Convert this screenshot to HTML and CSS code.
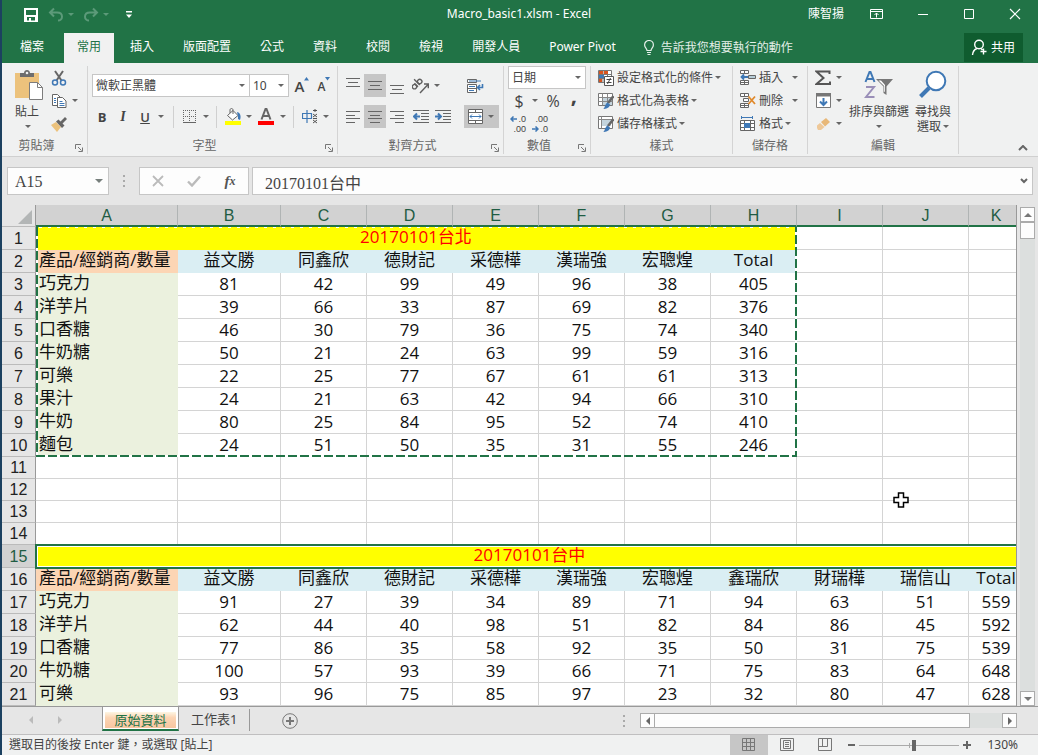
FILE: index.html
```html
<!DOCTYPE html>
<html lang="zh-Hant">
<head>
<meta charset="utf-8">
<title>Macro_basic1.xlsm - Excel</title>
<link rel="stylesheet" href="styles.css">
</head>
<body>
<div class="app">
  <header class="top">
    <div class="titlebar">
      <div class="quick">
        <button class="tbtn" aria-label="儲存"><svg width="16" height="16" viewBox="0 0 16 16"><path fill="#fff" fill-rule="evenodd" d="M1 1h14v14H1zM3 3v5h10V3zM4 10v3.500h2V11h2v2.500h4V10z"/></svg></button>
        <button class="tbtn undo" aria-label="復原"><svg width="26" height="16" viewBox="0 0 26 16" fill="none" stroke="#5c9a79" stroke-width="2"><path d="M6 1.500 2 5.500l4 4M2 5.500h7c3.500 0 5 2 5 4.200 0 2.500-2 3.800-4 3.800"/><path fill="#5c9a79" stroke="none" d="M20 6h6l-3 3z"/></svg></button>
        <button class="tbtn redo" aria-label="重做"><svg width="26" height="16" viewBox="0 0 26 16" fill="none" stroke="#5c9a79" stroke-width="2"><path d="M10 1.500l4 4-4 4M14 5.500H7c-3.500 0-5 2-5 4.200 0 2.500 2 3.800 4 3.800"/><path fill="#5c9a79" stroke="none" d="M20 6h6l-3 3z"/></svg></button>
        <button class="tbtn more" aria-label="自訂快速存取工具列"><svg width="8" height="8" viewBox="0 0 8 8" fill="#fff"><path d="M1 0h6v1.500H1zM1 3.500h6L4 7z"/></svg></button>
      </div>
      <h1 class="title">Macro_basic1.xlsm - Excel</h1>
      <div class="window-ctl">
        <span class="user">陳智揚</span>
        <button class="wbtn" aria-label="功能區顯示選項"><svg width="14" height="12" viewBox="0 0 14 12" fill="none" stroke="#fff"><path d="M.5 1.500h12v9H.5zM.5 3.500h12M6.500 9.500V5M4.500 7l2-2 2 2"/></svg></button>
        <button class="wbtn" aria-label="最小化"><svg width="12" height="12" viewBox="0 0 12 12" stroke="#fff"><path d="M1 6.500h10"/></svg></button>
        <button class="wbtn" aria-label="最大化"><svg width="12" height="12" viewBox="0 0 12 12" fill="none" stroke="#fff"><path d="M1.500 1.500h9v9h-9z"/></svg></button>
        <button class="wbtn" aria-label="關閉"><svg width="12" height="12" viewBox="0 0 12 12" stroke="#fff" stroke-width="1.200"><path d="M1 1l10 10M11 1 1 11"/></svg></button>
      </div>
    </div>
    <nav class="tabs">
      <button class="tab file">檔案</button>
      <button class="tab active">常用</button>
      <button class="tab">插入</button>
      <button class="tab">版面配置</button>
      <button class="tab">公式</button>
      <button class="tab">資料</button>
      <button class="tab">校閱</button>
      <button class="tab">檢視</button>
      <button class="tab">開發人員</button>
      <button class="tab">Power Pivot</button>
      <button class="tell"><svg width="12" height="16" viewBox="0 0 12 16" fill="none" stroke="#e4efe9" stroke-width="1.200"><path d="M4 10.500C4 8.500 1.600 7.500 1.600 4.900a4.400 4.400 0 0 1 8.800 0C10.400 7.500 8 8.500 8 10.500zM4 12.500h4M4.500 14.500h3"/></svg>告訴我您想要執行的動作</button>
      <button class="share"><svg width="17" height="17" viewBox="0 0 17 17" fill="none" stroke="#fff" stroke-width="1.400"><circle cx="8" cy="5.500" r="4.300"/><path d="M1.500 16c.3-3.600 2-5.600 4.500-6.500M10 9.500l1.500 1.500M12.500 9.500v6M9.500 12.500h6"/></svg>共用</button>
    </nav>
  </header>

  <section class="ribbon">
    <div class="group clip">
      <div class="body cols">
        <button class="big"><svg width="30" height="32" viewBox="0 0 30 32"><path fill="#ecc27c" d="M1 4h24v25H1z"/><path fill="#6d6d6d" d="M6 8V4h4c0-4 6-4 6 0h4v4z"/><circle cx="13" cy="4" r="1.300" fill="#f0f1f1"/><path fill="#fff" stroke="#7d7d7d" d="M15.500 13.500h8l5 5v12h-13z"/><path fill="none" stroke="#7d7d7d" d="M23.500 13.500v5h5"/></svg><span>貼上</span><i class="caret"></i></button>
        <div class="stack">
          <button class="ib" aria-label="剪下"><svg width="16" height="16" viewBox="0 0 16 16" fill="none"><path stroke="#666" stroke-width="2" d="M4 1l6.500 9.500M12 1 5.500 10.500"/><g stroke="#3f78b5" stroke-width="1.500"><circle cx="4" cy="12.500" r="2.500"/><circle cx="12" cy="12.500" r="2.500"/></g></svg></button>
          <div class="row"><button class="ib" aria-label="複製"><svg width="16" height="16" viewBox="0 0 16 16" fill="#fff" stroke="#666"><path d="M1.500 1.500h5l3 3v8h-8z"/><path d="M6.500 4.500h5l3.500 3.500v6.500H6.500z"/><path stroke="#3f78b5" d="M3 5.500h2M3 7.500h2M3 9.500h2M8.500 8.500h3M8.500 10.500h5M8.500 12.500h5"/></svg></button><i class="caret"></i></div>
          <button class="ib" aria-label="複製格式"><svg width="16" height="16" viewBox="0 0 16 16"><path fill="#ecc27c" d="M0 9l5-3 5 5-4 5z"/><path fill="#666" d="M5 5.500 7.500 3.500l2 2L14 1l2 2-4.500 4.500 2 2L11 12z"/></svg></button>
        </div>
      </div>
      <div class="foot"><span>剪貼簿</span><button class="launch" aria-label="剪貼簿設定"><svg width="8" height="8" viewBox="0 0 8 8" fill="none" stroke="#777"><path d="M.5 5V.5H6M3 3l3.500 3.500M7.500 3.500v4h-4"/></svg></button></div>
    </div>

    <div class="group font">
      <div class="body two">
        <div class="row">
          <label class="combo fam"><select aria-label="字型"><option>微軟正黑體</option></select></label>
          <label class="combo size"><select aria-label="字型大小"><option>10</option></select></label>
          <button class="ib grow" aria-label="放大字型"><span class="up">A</span><svg width="5" height="4" viewBox="0 0 5 4"><path fill="#3f78b5" d="M0 3.500h5L2.500 0z"/></svg></button>
          <button class="ib grow" aria-label="縮小字型"><span class="dn">A</span><svg width="5" height="4" viewBox="0 0 5 4"><path fill="#3f78b5" d="M0 0h5L2.500 3.500z"/></svg></button>
        </div>
        <div class="row">
          <button class="ib b">B</button><button class="ib i">I</button><button class="ib u">U</button><i class="caret"></i>
          <i class="sep"></i>
          <button class="ib" aria-label="框線"><svg width="14" height="14" viewBox="0 0 14 14" fill="none" stroke="#666"><path stroke-dasharray="1 1" d="M0 .5h13M0 6.500h13M.5 0v13M6.500 0v13M12.500 0v13"/><path d="M0 12.500h13"/></svg></button><i class="caret"></i>
          <i class="sep"></i>
          <button class="ib" aria-label="填滿色彩"><svg width="16" height="17" viewBox="0 0 16 17"><path fill="#ff0" d="M0 13h16v4H0z"/><path fill="#fff" stroke="#666" d="M2.500 7.500 8 2.500l5 5-5.500 4.500z"/><path fill="none" stroke="#666" d="M5 5V2c0-2 3-2 3 0v4"/><path fill="#3f78b5" d="M12 4c3 0 4.500 4 3 8l-2-1V8z"/></svg></button><i class="caret"></i>
          <button class="ib fc" aria-label="字型色彩"><svg width="16" height="17" viewBox="0 0 16 17"><path fill="#f00" d="M0 13h16v4H0z"/><path fill="none" stroke="#666" stroke-width="2" d="M3.500 11.500 7.500 1h1l4 10.500M5 8h6"/></svg></button><i class="caret"></i>
          <i class="sep"></i>
          <button class="ib" aria-label="注音標示"><svg width="16" height="15" viewBox="0 0 16 15" fill="none"><path stroke="#3f78b5" stroke-width="1.200" d="M.5 4.500h9v5h-9zM5 1v13"/><path stroke="#555" d="M11 1.500h4M13 0v3M11 5l4 3M15 5l-4 3M11 9.500h4M11 11l4 3M15 11l-4 3"/></svg></button><i class="caret"></i>
        </div>
      </div>
      <div class="foot"><span>字型</span><button class="launch" aria-label="字型設定"><svg width="8" height="8" viewBox="0 0 8 8" fill="none" stroke="#777"><path d="M.5 5V.5H6M3 3l3.500 3.500M7.500 3.500v4h-4"/></svg></button></div>
    </div>

    <div class="group align">
      <div class="body two">
        <div class="row">
          <button class="ib" aria-label="靠上對齊"><svg width="14" height="16" viewBox="0 0 14 16" stroke="#666"><path d="M0 .5h14M2 4.500h10M0 8.500h14"/></svg></button>
          <button class="ib on" aria-label="置中對齊"><svg width="14" height="16" viewBox="0 0 14 16" stroke="#666"><path d="M0 3.500h14M2 7.500h10M0 11.500h14"/></svg></button>
          <button class="ib" aria-label="靠下對齊"><svg width="14" height="16" viewBox="0 0 14 16" stroke="#666"><path d="M0 7.500h14M2 11.500h10M0 15.500h14"/></svg></button>
          <button class="ib nudge" aria-label="方向"><svg width="18" height="16" viewBox="0 0 18 16" fill="none" stroke="#5f5f5f" stroke-width="1.400"><g transform="rotate(-45 6 8)"><circle cx="3" cy="6" r="2.200"/><path d="M5.500 3.500v5M8 .5v8"/><circle cx="10.400" cy="6" r="2.200"/></g><path d="M8 15l8-8.500M12 6h4.300v4.300"/></svg></button><i class="caret"></i>
          <div class="end"><button class="ib" aria-label="自動換列"><svg width="17" height="16" viewBox="0 0 17 16" fill="#fff" stroke="#666"><path d="M.5 1.500h9v3h-9zM.5 6.500h9v8h-9zM.5 10.500h9"/><path fill="none" stroke="#3f78b5" d="M2 8.500h6M2 3h12M2 12.500h5"/><path fill="none" stroke="#3f78b5" stroke-width="1.600" d="M15.500 6v3.500H11M13 7l-2.500 2.500L13 12"/></svg></button></div>
        </div>
        <div class="row">
          <button class="ib" aria-label="靠左對齊"><svg width="14" height="14" viewBox="0 0 14 14" stroke="#666"><path d="M0 1.500h14M0 5.500h9M0 8.500h14M0 12.500h9"/></svg></button>
          <button class="ib on" aria-label="置中"><svg width="14" height="14" viewBox="0 0 14 14" stroke="#666"><path d="M0 1.500h14M2 5.500h10M0 8.500h14M2 12.500h10"/></svg></button>
          <button class="ib" aria-label="靠右對齊"><svg width="14" height="14" viewBox="0 0 14 14" stroke="#666"><path d="M0 1.500h14M5 5.500h9M0 8.500h14M5 12.500h9"/></svg></button>
          <button class="ib nudge" aria-label="減少縮排"><svg width="16" height="14" viewBox="0 0 16 14" fill="none" stroke="#666"><path d="M0 .5h16M8 3.500h8M8 6.500h8M8 9.500h8M0 12.500h16"/><path stroke="#3f78b5" stroke-width="2" d="M7 6.500H2M4 3.500l-3 3 3 3"/></svg></button>
          <button class="ib" aria-label="增加縮排"><svg width="16" height="14" viewBox="0 0 16 14" fill="none" stroke="#666"><path d="M0 .5h16M8 3.500h8M8 6.500h8M8 9.500h8M0 12.500h16"/><path stroke="#3f78b5" stroke-width="2" d="M0 6.500h5M3 3.500l3 3-3 3"/></svg></button>
          <div class="end on"><button class="ib" aria-label="跨欄置中"><svg width="15" height="15" viewBox="0 0 15 15" fill="#fff" stroke="#666"><path d="M.5.5h14v14H.5zM.5 3.500h14M.5 11.500h14M7.500 0v3M7.500 12v3"/><path stroke="#3f78b5" fill="none" d="M2 7.500h11M4 5.500l-2 2 2 2M11 5.500l2 2-2 2"/></svg></button><i class="caret"></i></div>
        </div>
      </div>
      <div class="foot"><span>對齊方式</span><button class="launch" aria-label="對齊設定"><svg width="8" height="8" viewBox="0 0 8 8" fill="none" stroke="#777"><path d="M.5 5V.5H6M3 3l3.500 3.500M7.500 3.500v4h-4"/></svg></button></div>
    </div>

    <div class="group number">
      <div class="body">
        <label class="combo fmt"><select aria-label="數值格式"><option>日期</option></select></label>
        <div class="row"><button class="ib money">$</button><i class="caret"></i><button class="ib pct">%</button><button class="ib comma">,</button></div>
        <div class="row">
          <button class="ib dec" aria-label="增加小數位數"><span class="pair"><svg width="7" height="6" viewBox="0 0 7 6" fill="none" stroke="#3f78b5" stroke-width="1.500"><path d="M7 3H1M3.500.5 1 3l2.500 2.500"/></svg>.0</span><span>.00</span></button>
          <button class="ib dec" aria-label="減少小數位數"><span>.00</span><span class="pair"><svg width="7" height="6" viewBox="0 0 7 6" fill="none" stroke="#3f78b5" stroke-width="1.500"><path d="M0 3h6M3.500.5 6 3 3.500 5.500"/></svg>.0</span></button>
        </div>
      </div>
      <div class="foot"><span>數值</span><button class="launch" aria-label="數值設定"><svg width="8" height="8" viewBox="0 0 8 8" fill="none" stroke="#777"><path d="M.5 5V.5H6M3 3l3.500 3.500M7.500 3.500v4h-4"/></svg></button></div>
    </div>

    <div class="group styles">
      <div class="body">
        <button class="line"><svg width="16" height="16" viewBox="0 0 16 16"><path fill="#fff" stroke="#777" d="M.5.5h13v12H.5zM.5 4.500h13M.5 8.500h13M5 .5v12M9.500.5v12"/><path fill="#d8541f" d="M1 1h4v3H1zM6 1h4v3H6zM1 9h3v3H1z"/><path fill="#3f78b5" d="M1 5h5v3H1z"/><path fill="#fff" stroke="#555" d="M6.500 6.500h9v9h-9z"/><path stroke="#444" d="M8.500 9.500h5M8.500 12.500h5M12.500 8l-3 6"/></svg>設定格式化的條件<i class="caret"></i></button>
        <button class="line"><svg width="16" height="16" viewBox="0 0 16 16"><path fill="#fff" stroke="#777" d="M.5.5h14v12H.5z"/><path fill="#c4d4dd" d="M5 5h9v7H5z"/><path fill="none" stroke="#888" d="M.5 4.500h14M.5 8.500h14M4.500.5v12M9.500.5v12"/><path stroke="#666" stroke-width="2.500" d="M15.500 3 10 10"/><path fill="#3f78b5" d="M5 16c2 0 1.500-5 4.500-6.500l2.500 2C11.500 15 8 16 5 16z"/></svg>格式化為表格<i class="caret"></i></button>
        <button class="line"><svg width="16" height="16" viewBox="0 0 16 16"><path fill="#fff" stroke="#777" d="M.5.5h14v12H.5z"/><path fill="#c4d4dd" d="M4 4h9v6H4z"/><path fill="none" stroke="#888" d="M.5 3.500h14M3.500.5v12"/><path stroke="#666" stroke-width="2.500" d="M15.500 3 10 10"/><path fill="#3f78b5" d="M5 16c2 0 1.500-5 4.500-6.500l2.500 2C11.500 15 8 16 5 16z"/></svg>儲存格樣式<i class="caret"></i></button>
      </div>
      <div class="foot"><span>樣式</span></div>
    </div>

    <div class="group cells">
      <div class="body">
        <button class="line far"><svg width="16" height="16" viewBox="0 0 16 16" fill="#fff" stroke="#666"><path d="M.5.5h8v3h-8zM4.500.5v3M.5 10.500h8v4h-8zM4.500 10.500v4M.5 12.500h8M8.500 5.500h7v3h-7z"/><path fill="#b8cdd8" stroke="none" d="M9 6h6v2H9z"/><path fill="none" stroke="#3f78b5" stroke-width="1.800" d="M8 7H2M4 4.500 1.500 7 4 9.500"/></svg>插入<i class="caret"></i></button>
        <button class="line far"><svg width="16" height="16" viewBox="0 0 16 16" fill="#fff" stroke="#666"><path d="M.5.5h8v3h-8zM4.500.5v3M.5 10.500h8v4h-8zM4.500 10.500v4M.5 12.500h8M3.500 5.500h5v3h-5z"/><path stroke="#e08a2c" stroke-width="1.800" d="M8.500 3.500 15 11M15 3.500 8.500 11"/></svg>刪除<i class="caret"></i></button>
        <button class="line"><svg width="16" height="16" viewBox="0 0 16 16" fill="#fff"><path stroke="#3f78b5" d="M1.500 0v3M12.500 0v3M2 1.500h10"/><path stroke="#666" d="M.5 4.500h14v10H.5zM.5 7.500h14M.5 11.500h14M4.500 4.500v10M10.500 4.500v10"/><path fill="#3f78b5" d="M4 7h6v5H4z"/></svg>格式<i class="caret"></i></button>
      </div>
      <div class="foot"><span>儲存格</span></div>
    </div>

    <div class="group edit">
      <div class="body cols">
        <div class="stack">
          <div class="row"><button class="ib" aria-label="自動加總"><svg width="16" height="16" viewBox="0 0 16 16" fill="none" stroke="#555" stroke-width="2"><path d="M14.500 4V1.500H1.500L8.500 8l-7 6h13.500V11.500"/></svg></button><i class="caret"></i></div>
          <div class="row"><button class="ib" aria-label="填滿"><svg width="15" height="15" viewBox="0 0 15 15"><path fill="#fff" stroke="#777" d="M.5.5h14v14H.5z"/><path fill="#777" d="M0 0h15v3.500H0z"/><path fill="none" stroke="#3f78b5" stroke-width="2" d="M7.500 5v7M4 8.500 7.500 12 11 8.500"/></svg></button><i class="caret"></i></div>
          <div class="row"><button class="ib" aria-label="清除"><svg width="14" height="14" viewBox="0 0 14 14"><path fill="#e8b878" d="M5 5 10 1l4 4-5 4.500z"/><path fill="#eec898" d="M4 6 8.500 10 5 13H2L1 11V8.500z"/></svg></button><i class="caret"></i></div>
        </div>
        <button class="big sort"><svg width="30" height="30" viewBox="0 0 30 30" fill="none"><path stroke="#3f78b5" stroke-width="2" d="M1.500 12 5.500 2h1L10.500 12M3 9h6"/><path stroke="#9a8fb8" stroke-width="2" d="M2 17h8L2 27h8.500"/><path fill="#777" d="M12 9h17l-6.500 7.500V25l-3-2v-6.500z"/><path fill="#fff" d="M14.500 10.500h2.500l4 4.500v7l-.8-.5V16z"/></svg><span>排序與篩選</span><i class="caret"></i></button>
        <button class="big find"><svg width="30" height="30" viewBox="0 0 30 30"><circle cx="18" cy="11" r="9.300" fill="#fff" stroke="#3f78b5" stroke-width="2"/><path stroke="#3f78b5" stroke-width="4" d="M11 18 2.500 26.500"/></svg><span>尋找與</span><span class="with">選取<i class="caret"></i></span></button>
      </div>
      <div class="foot"><span>編輯</span></div>
    </div>
    <button class="collapse" aria-label="摺疊功能區"><svg width="10" height="6" viewBox="0 0 10 6" fill="none" stroke="#666" stroke-width="2"><path d="M1 5l4-4 4 4"/></svg></button>
  </section>

  <section class="formula">
    <div class="box name"><input value="A15" aria-label="名稱方塊"><i class="caret teal"></i></div>
    <i class="dots"></i>
    <div class="box fx">
      <button class="ib" aria-label="取消"><svg width="12" height="12" viewBox="0 0 12 12" stroke="#bbb" stroke-width="1.800"><path d="M1 1l10 10M11 1 1 11"/></svg></button>
      <button class="ib" aria-label="輸入"><svg width="14" height="12" viewBox="0 0 14 12" fill="none" stroke="#bbb" stroke-width="2.400"><path d="M1 6.500 5 10.500 13 1.500"/></svg></button>
      <button class="ib fxb"><i>f</i><small>x</small></button>
    </div>
    <div class="box text"><input value="20170101台中" aria-label="資料編輯列"><svg width="8" height="6" viewBox="0 0 8 6" fill="none" stroke="#666" stroke-width="2"><path d="M1 1l3 3 3-3"/></svg></div>
  </section>

  <main class="work">
    <div class="pane">
      <table class="sheet">
        <colgroup><col class="c0"><col class="ca"><col class="cb"><col class="cn"><col class="cn"><col class="cn"><col class="cn"><col class="cn"><col class="cn"><col class="cn"><col class="cn"><col class="ck"></colgroup>
        <thead><tr><th class="corner"><svg width="14" height="14" viewBox="0 0 14 14"><path fill="#b3b6b6" d="M14 0v14H0z"/></svg></th><th>A</th><th>B</th><th>C</th><th>D</th><th>E</th><th>F</th><th>G</th><th>H</th><th>I</th><th>J</th><th>K</th></tr></thead>
        <tbody>
          <tr><th>1</th><td class="banner" colspan="8">20170101台北</td><td></td><td></td><td></td></tr>
          <tr><th>2</th><td class="key">產品/經銷商/數量</td><td class="hd">益文勝</td><td class="hd">同鑫欣</td><td class="hd">德財記</td><td class="hd">采德樺</td><td class="hd">漢瑞強</td><td class="hd">宏聰煌</td><td class="hd">Total</td><td></td><td></td><td></td></tr>
          <tr><th>3</th><td class="item">巧克力</td><td>81</td><td>42</td><td>99</td><td>49</td><td>96</td><td>38</td><td>405</td><td></td><td></td><td></td></tr>
          <tr><th>4</th><td class="item">洋芋片</td><td>39</td><td>66</td><td>33</td><td>87</td><td>69</td><td>82</td><td>376</td><td></td><td></td><td></td></tr>
          <tr><th>5</th><td class="item">口香糖</td><td>46</td><td>30</td><td>79</td><td>36</td><td>75</td><td>74</td><td>340</td><td></td><td></td><td></td></tr>
          <tr><th>6</th><td class="item">牛奶糖</td><td>50</td><td>21</td><td>24</td><td>63</td><td>99</td><td>59</td><td>316</td><td></td><td></td><td></td></tr>
          <tr><th>7</th><td class="item">可樂</td><td>22</td><td>25</td><td>77</td><td>67</td><td>61</td><td>61</td><td>313</td><td></td><td></td><td></td></tr>
          <tr><th>8</th><td class="item">果汁</td><td>24</td><td>21</td><td>63</td><td>42</td><td>94</td><td>66</td><td>310</td><td></td><td></td><td></td></tr>
          <tr><th>9</th><td class="item">牛奶</td><td>80</td><td>25</td><td>84</td><td>95</td><td>52</td><td>74</td><td>410</td><td></td><td></td><td></td></tr>
          <tr><th>10</th><td class="item">麵包</td><td>24</td><td>51</td><td>50</td><td>35</td><td>31</td><td>55</td><td>246</td><td></td><td></td><td></td></tr>
          <tr class="empty"><th>11</th><td></td><td></td><td></td><td></td><td></td><td></td><td></td><td></td><td></td><td></td><td></td></tr>
          <tr class="empty"><th>12</th><td></td><td></td><td></td><td></td><td></td><td></td><td></td><td></td><td></td><td></td><td></td></tr>
          <tr class="empty"><th>13</th><td></td><td></td><td></td><td></td><td></td><td></td><td></td><td></td><td></td><td></td><td></td></tr>
          <tr class="empty"><th>14</th><td></td><td></td><td></td><td></td><td></td><td></td><td></td><td></td><td></td><td></td><td></td></tr>
          <tr class="picked"><th>15</th><td class="banner" colspan="11">20170101台中</td></tr>
          <tr><th>16</th><td class="key">產品/經銷商/數量</td><td class="hd">益文勝</td><td class="hd">同鑫欣</td><td class="hd">德財記</td><td class="hd">采德樺</td><td class="hd">漢瑞強</td><td class="hd">宏聰煌</td><td class="hd">鑫瑞欣</td><td class="hd">財瑞樺</td><td class="hd">瑞信山</td><td class="hd">Total</td></tr>
          <tr><th>17</th><td class="item">巧克力</td><td>91</td><td>27</td><td>39</td><td>34</td><td>89</td><td>71</td><td>94</td><td>63</td><td>51</td><td>559</td></tr>
          <tr><th>18</th><td class="item">洋芋片</td><td>62</td><td>44</td><td>40</td><td>98</td><td>51</td><td>82</td><td>84</td><td>86</td><td>45</td><td>592</td></tr>
          <tr><th>19</th><td class="item">口香糖</td><td>77</td><td>86</td><td>35</td><td>58</td><td>92</td><td>35</td><td>50</td><td>31</td><td>75</td><td>539</td></tr>
          <tr><th>20</th><td class="item">牛奶糖</td><td>100</td><td>57</td><td>93</td><td>39</td><td>66</td><td>71</td><td>75</td><td>83</td><td>64</td><td>648</td></tr>
          <tr><th>21</th><td class="item">可樂</td><td>93</td><td>96</td><td>75</td><td>85</td><td>97</td><td>23</td><td>32</td><td>80</td><td>47</td><td>628</td></tr>
        </tbody>
      </table>
      <svg class="ants" width="763" height="233" viewBox="0 0 763 233" fill="none" stroke-width="2"><path stroke="#fff" d="M2 1v229h759V1"/><path stroke="#fff" stroke-width="1" stroke-dasharray="3 6" d="M4 1.500h757"/><path stroke="#217346" stroke-dasharray="9 3" d="M2 1v229h759V1"/></svg>
      <div class="selection"></div>
      <svg class="cursor" width="16" height="16" viewBox="0 0 16 16"><path fill="#fff" stroke="#000" stroke-width="1.500" d="M5.500 1h5v4.500H15v5h-4.500V15h-5v-4.500H1v-5h4.500z"/></svg>
    </div>
    <div class="vscroll"><button aria-label="向上"><i class="tri up"></i></button><div class="thumb"></div><button class="last" aria-label="向下"><i class="tri down"></i></button></div>
  </main>

  <footer class="sheets">
    <div class="nav"><i class="tri left dim"></i><i class="tri right dim"></i></div>
    <button class="stab current"><span>原始資料</span></button>
    <button class="stab">工作表1</button>
    <button class="add" aria-label="新工作表"><svg width="16" height="16" viewBox="0 0 16 16" fill="none" stroke="#777"><circle cx="8" cy="8" r="7.300"/><path stroke-width="2" d="M8 4v8M4 8h8"/></svg></button>
    <i class="dots"></i>
    <div class="hscroll"><button aria-label="向左"><i class="tri left"></i></button><div class="thumb"></div><button class="last" aria-label="向右"><i class="tri right"></i></button></div>
  </footer>

  <footer class="status">
    <span class="msg">選取目的後按 Enter 鍵，或選取 [貼上]</span>
    <button class="view on" aria-label="標準模式"><svg width="14" height="14" viewBox="0 0 14 14" fill="none" stroke="#777"><path d="M.5.5h12v12H.5zM4.500 0v13M8.500 0v13M0 4.500h13M0 8.500h13"/></svg></button>
    <button class="view" aria-label="整頁模式"><svg width="14" height="14" viewBox="0 0 14 14" fill="none" stroke="#777"><path d="M.5.5h13v12H.5zM3.500 2.500h7v8h-7zM5 4.500h4M5 6.500h4M5 8.500h4"/></svg></button>
    <button class="view" aria-label="分頁預覽"><svg width="14" height="14" viewBox="0 0 14 14" fill="none" stroke="#777"><path d="M.5.5h13v12H.5zM4.500 1v7.500M9.500 1v7.500M0 8.500h9.500"/></svg></button>
    <button class="zbtn" aria-label="縮小"><svg width="7" height="8" viewBox="0 0 7 8"><path stroke="#666" stroke-width="2" d="M0 4h7"/></svg></button>
    <input class="zoom" type="range" min="0" max="100" value="55" aria-label="顯示比例">
    <button class="zbtn" aria-label="放大"><svg width="8" height="8" viewBox="0 0 8 8"><path stroke="#666" stroke-width="2" d="M0 4h8M4 0v8"/></svg></button>
    <button class="pctv">130%</button>
  </footer>
</div>
</body>
</html>
```
FILE: styles.css
```css
* { box-sizing: border-box; }
body {
  margin: 0;
  font: 12px/16px "Noto Sans", "Noto Sans CJK TC", sans-serif;
  color: #444;
  background: #e6e6e6;
}
button, input, select {
  font: inherit;
  color: inherit;
  margin: 0;
  padding: 0;
  border: 0;
  border-radius: 0;
  background: none;
  white-space: nowrap;
}
svg { display: block; flex: none; }
i { font-style: normal; }
.app {
  min-height: 100vh;
  display: flex;
  flex-direction: column;
  border-left: 2px solid #1c4160;
  overflow: hidden;
}

/* title bar and tabs */
.top { background: #217346; color: #fff; }
.titlebar {
  display: grid;
  grid-template-columns: 1fr auto 1fr;
  align-items: center;
  height: 27px;
}
.quick { display: flex; align-items: center; gap: 9px; padding: 2px 0 0 21px; }
.more { margin-left: 7px; }
.title { margin: 0 2px 0 0; font-size: 12px; font-weight: 400; }
.window-ctl { display: flex; align-items: center; justify-content: flex-end; }
.user { margin-right: 10px; }
.wbtn { width: 46px; height: 26px; display: flex; align-items: center; justify-content: center; }
.tabs { display: flex; align-items: flex-end; gap: 3px; height: 36px; padding-left: 5px; }
.tab { height: 30px; padding: 0 13px 2px; }
.file { margin-right: 4px; }
.tab.active { background: #f1f1f1; color: #217346; }
.tell { height: 30px; display: flex; align-items: center; gap: 6px; margin-left: 11px; color: #e4efe9; }
.share {
  display: flex;
  align-items: center;
  gap: 3px;
  height: 29px;
  margin: 0 15px 1px auto;
  padding: 0 8px 0 7px;
  background: #0f5c2f;
}

/* ribbon */
.ribbon {
  display: flex;
  height: 94px;
  padding: 3px 0 2px;
  background: #f0f1f1;
  border-bottom: 1px solid #d0d0d0;
}
.group { display: flex; flex-direction: column; border-right: 1px solid #d4d4d4; flex: none; }
.body { height: 73px; padding: 0 4px; }
.body.two { padding-top: 8px; display: flex; flex-direction: column; gap: 8px; }
.body.cols { display: flex; }
.row { display: flex; align-items: center; height: 23px; }
.foot { display: flex; align-items: center; height: 16px; color: #666; }
.foot span { flex: 1; text-align: center; }
.launch { width: 16px; height: 14px; padding: 4px 0 0 4px; }
.clip { width: 86px; }
.font { width: 250px; }
.align { width: 166px; }
.number { width: 87px; }
.styles { width: 142px; }
.cells { width: 75px; }
.edit { width: 151px; }
.ib {
  width: 22px;
  height: 23px;
  display: flex;
  align-items: center;
  justify-content: center;
  flex: none;
}
.on { background: #c6c6c6; }
.caret { width: 10px; flex: none; display: flex; justify-content: center; }
.caret::before { content: ""; border: 3px solid transparent; border-top-color: #666; border-bottom: 0; }
.sep { width: 1px; height: 22px; margin: 0 5px; background: #d0d0d0; }
.big { display: flex; flex-direction: column; align-items: center; line-height: 15px; padding-top: 3px; }
.big svg { margin-bottom: 3px; }
.big > .caret { margin-top: 6px; }
.clip .body { padding: 0; }
.clip .big { width: 46px; padding-left: 8px; align-items: flex-start; }
.clip .big svg { margin-left: 4px; }
.clip .big span { margin-left: 5px; }
.clip .big .caret { margin-left: 13px; }
.clip .stack { width: 40px; }
.combo { position: relative; flex: none; height: 23px; border: 1px solid #c6c6c6; background: #fff; display: block; }
.combo::after {
  content: "";
  position: absolute;
  right: 4px;
  top: 9px;
  border: 3px solid transparent;
  border-top-color: #666;
  border-bottom: 0;
}
.combo select { appearance: none; width: 100%; height: 21px; padding-left: 3px; display: block; outline: 0; }
.fam { width: 158px; }
.size { width: 40px; margin-left: -1px; margin-right: 2px; }
.fmt { width: 78px; }
.grow { align-items: flex-start; padding-top: 3px; }
.grow .up { font: 600 15px/18px "Open Sans", sans-serif; }
.grow .dn { font: 600 12px/20px "Open Sans", sans-serif; }
.b { width: 20px; font: 700 13px/20px "Open Sans", sans-serif; }
.i { font: italic 600 14px/20px "Liberation Serif", serif; }
.u { font: 600 13px/20px "Open Sans", sans-serif; text-decoration: underline; }
.u + .caret { margin-right: 2px; }
.fc { width: 24px; }
.nudge { margin-left: 2px; }
.end { display: flex; align-items: center; width: 35px; margin-left: auto; }
.money, .pct { font: 16px/20px "Open Sans", sans-serif; }
.pct { width: 26px; }
.comma { width: 16px; font: 700 22px/20px "Open Sans", sans-serif; padding-bottom: 13px; }
.dec {
  flex-direction: column;
  align-items: flex-end;
  font: 9px/10px "Liberation Sans", sans-serif;
  padding-right: 4px;
}
.pair { display: flex; align-items: center; gap: 1px; }
.styles .body, .cells .body { padding: 0 0 0 7px; }
.line { display: flex; align-items: center; height: 23px; width: 100%; }
.line svg { margin-right: 3px; }
.far .caret { margin-left: 7px; }
.edit .stack { width: 33px; }
.edit .body { gap: 4px; }
.edit .big { padding-top: 4px; }
.edit .big svg { margin-bottom: 4px; }
.sort { width: 60px; margin-right: 2px; }
.find { width: 36px; }
.with { display: flex; align-items: center; }
.find .with { align-self: flex-start; padding-left: 2px; }
.collapse { margin: auto 8px 0 auto; width: 12px; height: 12px; }

/* formula bar */
.formula { display: flex; align-items: center; height: 48px; padding: 0 5px; }
.box {
  display: flex;
  align-items: center;
  height: 28px;
  background: #fdfdfd;
  border: 1px solid #c6c6c6;
  font: 16px/20px "Liberation Serif", "Noto Sans CJK TC", serif;
}
.box input { flex: 1; min-width: 0; height: 26px; padding-top: 2px; outline: 0; }
.name { width: 102px; padding: 0 4px 0 7px; }
.teal::before { border-width: 4px 4px 0; border-top-color: #777f7c; }
.dots { width: 2px; height: 12px; background: repeating-linear-gradient(#aaa 0 2px, transparent 2px 5px); }
.formula .dots { margin: 0 14px; }
.fx { width: 110px; padding: 0 7px; justify-content: space-between; }
.fxb { font: italic 700 15px/20px "Liberation Serif", serif; color: #555; }
.fxb i { font-style: italic; }
.fxb small { font-size: 12px; }
.text { flex: 1; margin-left: 3px; padding: 0 4px 0 12px; }

/* worksheet */
.work { flex: 1; display: flex; min-height: 0; }
.pane { flex: 1; min-width: 0; position: relative; overflow: hidden; background: #fff; border-right: 1px solid #999; }
.sheet { table-layout: fixed; width: 1022px; border-collapse: separate; border-spacing: 0; }
.c0 { width: 34px; }
.ca { width: 142px; }
.cb { width: 103px; }
.cn { width: 86px; }
.ck { width: 55px; }
.sheet th {
  padding: 1px 0 0;
  font: 16px/20px "Liberation Sans", "Noto Sans CJK TC", sans-serif;
  color: #222;
  background: #e6e6e6;
  border-right: 1px solid #999;
  border-bottom: 1px solid #bbb;
}
.sheet thead th {
  height: 22px;
  line-height: 19px;
  color: #1f5c43;
  background: #d2d2d2;
  border-right-color: #b0b4b4;
  border-bottom: 2px solid #217346;
}
.sheet thead .corner { background: #e6e6e6; border-bottom: 1px solid #bbb; border-right-color: #999; }
.corner svg { margin: 2px 3px 0 auto; }
.sheet td {
  height: 23px;
  padding: 0;
  font: 17px/22px "Open Sans", "Noto Sans CJK TC", sans-serif;
  color: #111;
  text-align: center;
  border-right: 1px solid #d4d4d4;
  border-bottom: 1px solid #d4d4d4;
  white-space: nowrap;
}
.sheet .empty td { height: 22px; line-height: 21px; }
.sheet .banner, .sheet .key, .sheet .item, .sheet .hd { line-height: 20px; padding-bottom: 2px; }
.sheet .banner { background: #ff0; color: #f00; border-color: #ff0; }
.sheet .key, .sheet .item { text-align: left; padding-left: 3px; background: #ebf1de; border-color: #ebf1de; }
.sheet .key { background: #fcd5b4; border-color: #fcd5b4; }
.sheet .hd { background: #daeef3; border-color: #daeef3; }
.sheet .picked th { background: #d2d2d2; color: #1f5c43; }
.ants { position: absolute; left: 33px; top: 21px; }
.selection {
  position: absolute;
  left: 33px;
  right: -4px;
  top: 339px;
  height: 25px;
  border: 2px solid #217346;
  box-shadow: inset 0 0 0 1px #fff;
}
.cursor { position: absolute; left: 891px; top: 287px; }
.vscroll { display: flex; flex-direction: column; width: 21px; padding: 2px 3px 0; }
.vscroll, .hscroll { background: #dcdfde; background-clip: content-box; }
.vscroll button, .hscroll button {
  width: 15px;
  height: 15px;
  display: flex;
  align-items: center;
  justify-content: center;
  background: #fdfdfd;
  border: 1px solid #ababab;
}
.vscroll .thumb { height: 17px; background: #fdfdfd; border: 1px solid #ababab; }
.vscroll .last { margin-top: auto; }
.hscroll .last { margin-left: auto; }
.tri { border: 4px solid transparent; }
.tri.up { border-bottom-color: #777; border-top: 0; }
.tri.down { border-top-color: #777; border-bottom: 0; }
.tri.left { border-right-color: #666; border-left: 0; }
.tri.right { border-left-color: #666; border-right: 0; }
.tri.dim.left { border-right-color: #bbb; }
.tri.dim.right { border-left-color: #bbb; }

/* sheet tabs */
.sheets { display: flex; align-items: center; height: 28px; padding-right: 21px; border-top: 1px solid #999; }
.nav { width: 100px; display: flex; gap: 25px; padding: 0 0 2px 27px; }
.stab { align-self: flex-start; height: 22px; padding: 0 12px 2px; font-size: 13px; }
.stab:not(.current) { border-right: 1px solid #999; margin-top: 2px; }
.current {
  width: 77px;
  height: 24px;
  padding: 4px 2px 1px;
  background: #fff;
  border: 1px solid #999;
  border-top: 0;
  border-bottom: 2px solid #217346;
  color: #217346;
}
.current span { display: block; line-height: 16px; background: linear-gradient(#fdf6e4, #fcd5b4 35%, #f8c5a0); }
.add { margin-left: 32px; }
.sheets .dots { margin-left: auto; margin-right: 15px; }
.hscroll { display: flex; width: 377px; height: 15px; }
.hscroll .thumb { width: 316px; margin-left: -1px; background: #fdfdfd; border: 1px solid #ababab; }

/* status bar */
.status {
  display: flex;
  align-items: center;
  height: 21px;
  background: #f0f1f1;
  border-top: 1px solid #c0bfc0;
}
.msg { flex: 1; padding-left: 7px; }
.view { width: 38px; height: 20px; display: flex; align-items: center; justify-content: center; }
.zbtn { margin: 0 4px; }
.zoom {
  appearance: none;
  width: 100px;
  height: 16px;
  outline: 0;
  background: linear-gradient(#aaa, #aaa) center / 100% 1px no-repeat, linear-gradient(#aaa, #aaa) center / 1px 5px no-repeat;
}
.zoom::-webkit-slider-thumb { appearance: none; width: 4px; height: 11px; background: #666; }
.pctv { margin: 0 20px 0 12px; }
```
